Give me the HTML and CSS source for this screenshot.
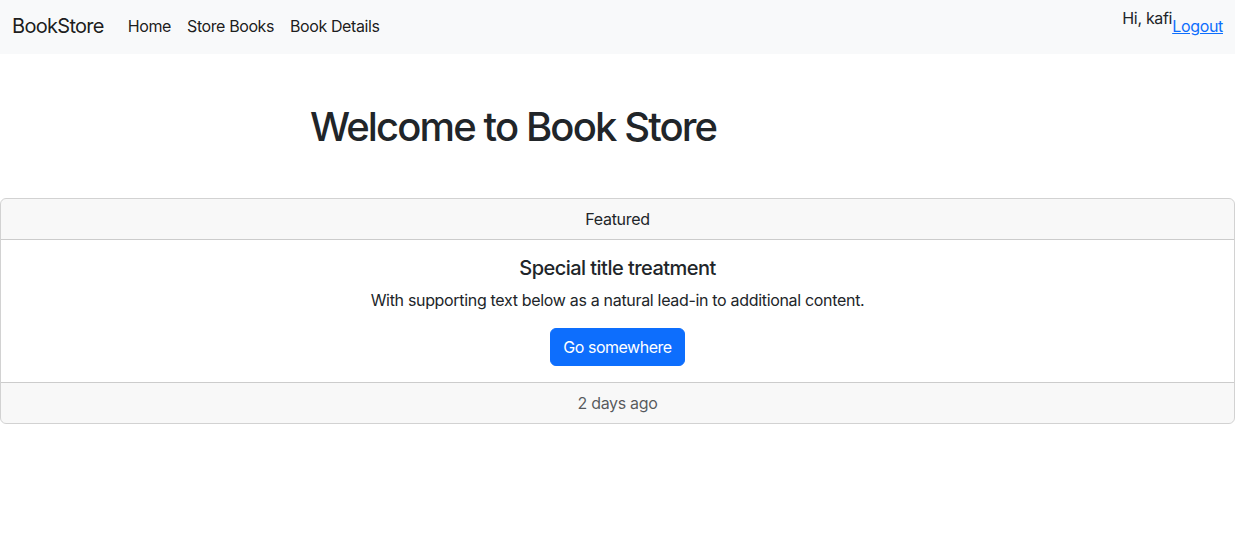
FILE: index.html
```html
<!DOCTYPE html>
<html lang="en">
<head>
<meta charset="utf-8">
<title>BookStore</title>
<link rel="stylesheet" href="styles.css">
</head>
<body>
<nav class="navbar">
  <div class="nav-left">
    <a class="brand" href="#">BookStore</a>
    <ul class="nav-links">
      <li><a href="#">Home</a></li>
      <li><a href="#">Store Books</a></li>
      <li><a href="#">Book Details</a></li>
    </ul>
  </div>
  <div class="nav-right">
    <span class="greeting">Hi, kafi</span><a class="logout" href="#">Logout</a>
  </div>
</nav>
<main>
  <section class="hero">
    <h1>Welcome to Book Store</h1>
  </section>
  <div class="card">
    <div class="card-header">Featured</div>
    <div class="card-body">
      <h5 class="card-title">Special title treatment</h5>
      <p class="card-text">With supporting text below as a natural lead-in to additional content.</p>
      <a href="#" class="btn">Go somewhere</a>
    </div>
    <div class="card-footer">2 days ago</div>
  </div>
</main>
</body>
</html>
```
FILE: styles.css
```css
* { box-sizing: border-box; }
html, body { margin: 0; padding: 0; }
body {
  font-family: Inter, "Noto Sans", "Liberation Sans", sans-serif;
  font-size: 16px;
  line-height: 1.5;
  color: #212529;
  background: #fff;
  letter-spacing: -0.02em;
}
.navbar {
  display: flex;
  justify-content: space-between;
  align-items: flex-start;
  background: #f8f9fa;
  height: 54px;
  padding: 0 12px;
}
.nav-left {
  display: flex;
  align-items: center;
  height: 54px;
  padding-bottom: 2px;
}
.brand {
  font-size: 20px;
  line-height: 30px;
  color: rgba(0,0,0,0.9);
  text-decoration: none;
  margin-right: 16px;
  letter-spacing: -0.035em;
}
.nav-links {
  display: flex;
  list-style: none;
  margin: 0;
  padding: 0;
}
.nav-links a {
  display: block;
  padding: 8px;
  color: rgba(0,0,0,0.9);
  text-decoration: none;
  letter-spacing: -0.025em;
}
.nav-right {
  display: flex;
  align-items: flex-start;
  padding-top: 6px;
}
.greeting { line-height: 24px; }
.logout {
  color: #0d6efd;
  text-decoration: underline;
  line-height: 24px;
  margin-top: 8px;
}
.hero {
  padding: 49px 0 47px 310px;
}
.hero h1 {
  margin: 0;
  font-size: 40px;
  font-weight: 500;
  line-height: 1.2;
  letter-spacing: -0.047em;
}
.card {
  border: 1px solid rgba(0,0,0,0.175);
  border-radius: 6px;
  text-align: center;
  overflow: hidden;
}
.card-header {
  background: rgba(33,37,41,0.03);
  border-bottom: 1px solid rgba(0,0,0,0.175);
  padding: 8px 16px;
}
.card-body {
  padding: 16px;
}
.card-title {
  margin: 0 0 8px;
  font-size: 20px;
  font-weight: 500;
  line-height: 1.2;
  letter-spacing: -0.027em;
}
.card-text {
  margin: 0 0 16px;
}
.btn {
  display: inline-block;
  padding: 6px 12px;
  background: #0d6efd;
  color: #fff;
  border: 1px solid #0d6efd;
  border-radius: 6px;
  text-decoration: none;
  line-height: 24px;
  letter-spacing: -0.03em;
}
.card-footer {
  background: rgba(33,37,41,0.03);
  border-top: 1px solid rgba(0,0,0,0.175);
  padding: 8px 16px;
  color: rgba(33,37,41,0.75);
}
```
